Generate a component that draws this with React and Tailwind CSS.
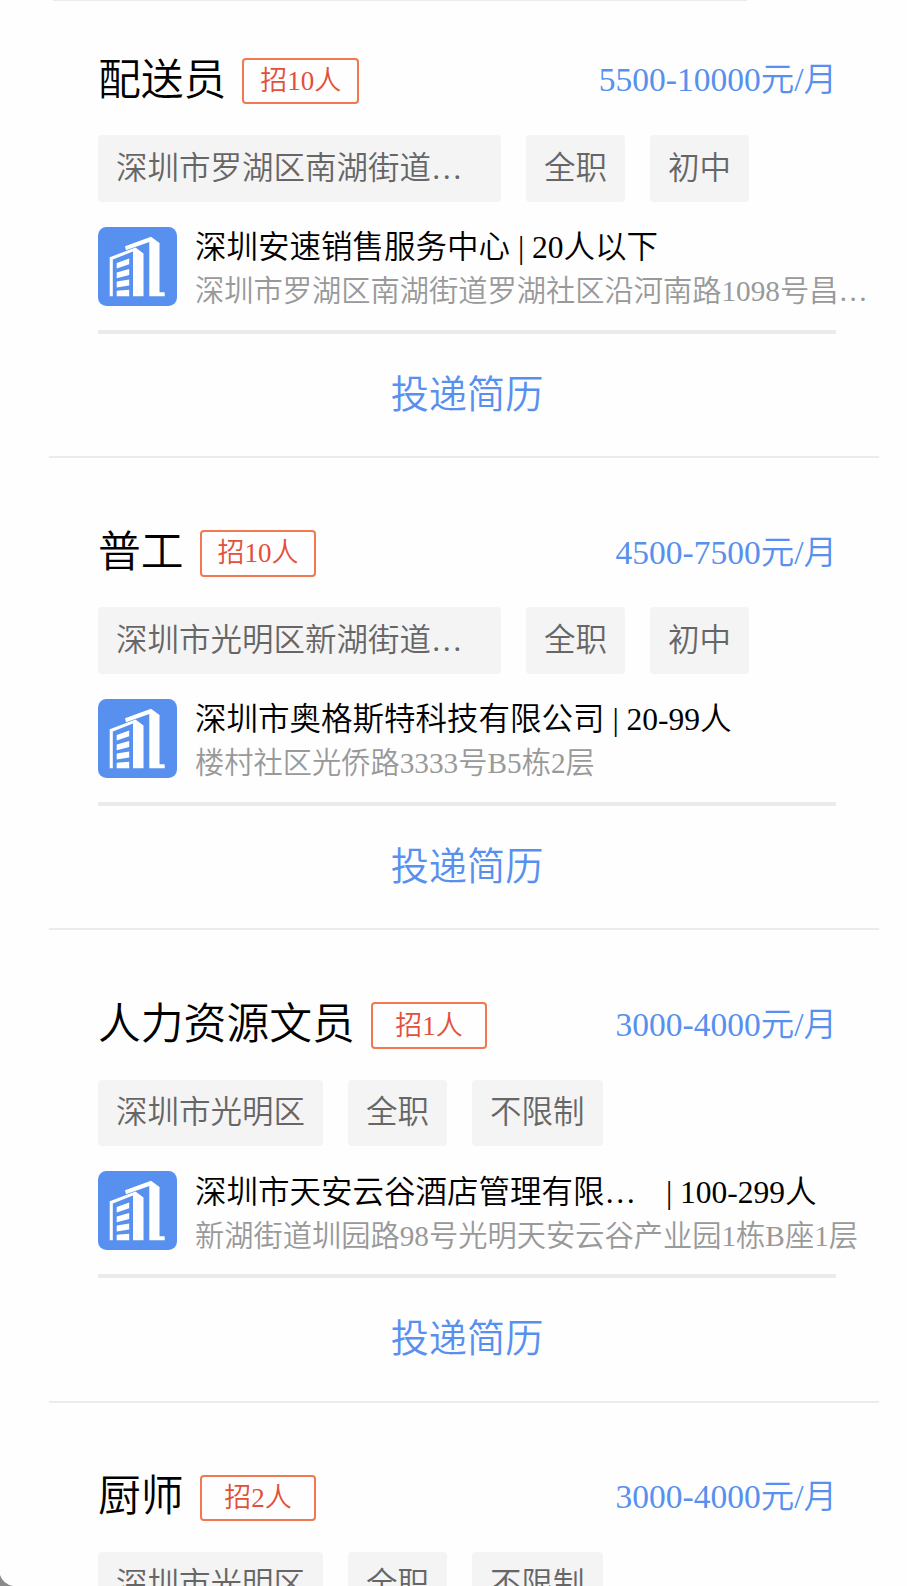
const jobs = [
  {
    title: '配送员', count: '招10人', salary: '5500-10000元/月',
    place: '深圳市罗湖区南湖街道…', wide: true, type: '全职', degree: '初中',
    company: '深圳安速销售服务中心', size: '20人以下',
    address: '深圳市罗湖区南湖街道罗湖社区沿河南路1098号昌…',
  },
  {
    title: '普工', count: '招10人', salary: '4500-7500元/月',
    place: '深圳市光明区新湖街道…', wide: true, type: '全职', degree: '初中',
    company: '深圳市奥格斯特科技有限公司', size: '20-99人',
    address: '楼村社区光侨路3333号B5栋2层',
  },
  {
    title: '人力资源文员', count: '招1人', salary: '3000-4000元/月',
    place: '深圳市光明区', type: '全职', degree: '不限制',
    company: '深圳市天安云谷酒店管理有限…', clipped: true, size: '100-299人',
    address: '新湖街道圳园路98号光明天安云谷产业园1栋B座1层',
  },
  {
    title: '厨师', count: '招2人', salary: '3000-4000元/月',
    place: '深圳市光明区', type: '全职', degree: '不限制',
  },
];

function BuildingIcon() {
  return (
    <svg viewBox="0 0 79 79" className="h-[79px] w-[79px] shrink-0">
      <rect width="79" height="79" rx="8.5" fill="#5790ee" />
      <g fill="#fff">
        <path d="M27 19.3 53 9.7 61.5 16V65.3h5.2v3.9H51.3V15L28 23.2z" />
        <path d="M11.7 30.2 37.5 20.6 45.5 26.5V69.2H35V24.6L14.8 32.4V69.2h-3.1z" />
        <path d="M18.7 36 31.2 31.6V37.2L18.7 41.4z" />
        <path d="M18.7 45.6 31.2 42.1V47.9L18.7 51.2z" />
        <path d="M18.7 54.6 31.2 52.4V58.4L18.7 60.4z" />
        <path d="M18.7 63.8 31.2 62.7V69.2H18.7z" />
      </g>
    </svg>
  );
}

function Tag({ children, wide }) {
  return (
    <span
      className={`flex h-[66.7px] items-center rounded-[4px] bg-[#f4f4f4] px-[18px] text-[31.5px] text-[#666] ${wide ? 'w-[403px]' : ''}`}
    >
      <span>{children}</span>
    </span>
  );
}

function JobCard({ job }) {
  return (
    <li className={`flex shrink-0 flex-col pl-[49px] pr-[43px] ${job.company ? 'h-[400.3px] border-b-2 border-[#ececec]' : ''}`}>
      <div className="flex h-[46.6px] items-center">
        <h2 className="text-[42.8px] text-black">{job.title}</h2>
        <span className="ml-4 flex h-full w-[116.6px] items-center justify-center rounded-[4px] border-2 border-[#f1784f] pt-px text-[27px] text-[#e2503a]">
          {job.count}
        </span>
        <span className="-mr-px -mt-[2px] ml-auto text-[33.5px] text-[#5790ee]">{job.salary}</span>
      </div>
      <div className="mt-[30.7px] flex gap-[25px]">
        <Tag wide={job.wide}>{job.place}</Tag>
        <Tag>{job.type}</Tag>
        <Tag>{job.degree}</Tag>
      </div>
      {job.company && (
        <>
          <div className="mt-[25px] flex h-[79px] whitespace-nowrap">
            <BuildingIcon />
            <div className="ml-[18px]">
              <div className="flex h-[42px] items-center text-[31.5px] text-black">
                <span className={job.clipped ? 'w-[463px]' : ''}>{job.company}</span>
                <span className="whitespace-pre"> | {job.size}</span>
              </div>
              <div className="flex h-[46px] items-center text-[29.25px] text-[#999]">{job.address}</div>
            </div>
          </div>
          <div className="mt-[24px] h-1 shrink-0 bg-[#ebebeb]" />
          <button className="flex h-[122px] w-full items-center justify-center text-[38.2px] text-[#5790ee]">
            投递简历
          </button>
        </>
      )}
    </li>
  );
}

export default function App() {
  return (
    <main className="relative h-[1586px] w-[907px] overflow-hidden bg-[#fefefe] font-['Liberation_Serif','Noto_Sans_CJK_SC_DemiLight','Noto_Sans_CJK_SC',sans-serif] font-[350] leading-none">
      <div className="ml-[53px] h-px w-[694px] bg-[#ebebeb]" />
      <ul className="ml-[49px] mt-[56.7px] flex w-[830px] flex-col gap-[72px]">
        {jobs.map((job) => (
          <JobCard key={job.title} job={job} />
        ))}
      </ul>
      <svg viewBox="0 0 14 14" className="absolute bottom-0 left-0 h-[14px] w-[14px]">
        <path d="M0 3Q3 12 13 14H0z" fill="#8a8a8a" />
      </svg>
    </main>
  );
}
